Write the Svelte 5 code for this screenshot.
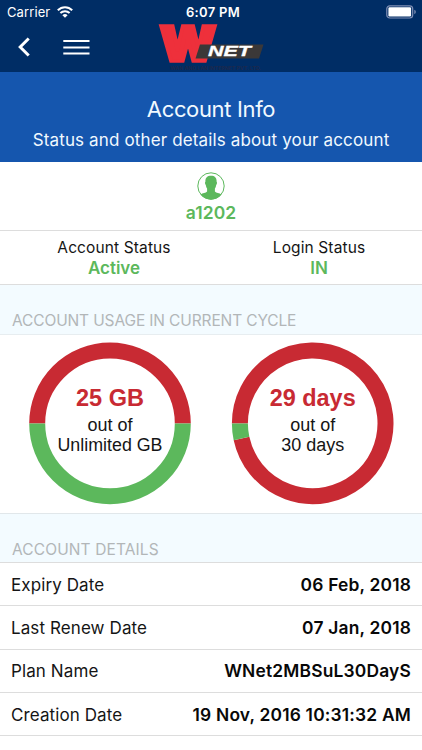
<script>
  const details = [
    { label: 'Expiry Date', value: '06 Feb, 2018' },
    { label: 'Last Renew Date', value: '07 Jan, 2018' },
    { label: 'Plan Name', value: 'WNet2MBSuL30DayS' },
    { label: 'Creation Date', value: '19 Nov, 2016 10:31:32 AM' }
  ];
</script>

<main>
  <header>
    <div class="status">
      <div class="network">
        <span class="carrier">Carrier</span>
        <svg class="wifi" width="16" height="12" viewBox="0 0 16 12">
          <g fill="none" stroke="#fff" stroke-width="2">
            <path d="M.8 4.3C4.9.2 11.1.2 15.2 4.3" />
            <path d="M3.4 7C6 4.5 10 4.5 12.6 7" />
          </g>
          <path d="M8 11.8 5.4 9.2Q8 6.8 10.6 9.2Z" fill="#fff" />
        </svg>
      </div>
      <span class="time">6:07 PM</span>
      <svg class="battery" width="31" height="14" viewBox="0 0 31 14">
        <rect x=".8" y=".8" width="25.9" height="12.2" rx="3" fill="none" stroke="#8090b5" stroke-width="1.2" />
        <rect x="2.4" y="2.3" width="22.7" height="9.2" rx="1.2" fill="#fff" />
        <path d="M28.3 4.8q1.5.6 1.5 2.2t-1.5 2.2z" fill="#8090b5" />
      </svg>
    </div>
    <nav>
      <svg class="back" width="14" height="20" viewBox="0 0 14 20"><path d="M11.7 1.5 3.2 10l8.5 8.5" fill="none" stroke="#fff" stroke-width="3" /></svg>
      <svg class="menu" width="27" height="17" viewBox="0 0 27 17"><path d="M.3 2h26.2M.3 8.4h26.2M.3 14.6h26.2" stroke="#fff" stroke-width="2" /></svg>
      <svg class="logo" width="112" height="50" viewBox="155 22 112 50">
        <text class="w" x="0" y="0" transform="translate(160 61) scale(1 1.2)" textLength="56" lengthAdjust="spacingAndGlyphs">W</text>
        <path d="M200 44.500h63.500l-4.500 14h-63.500z" fill="#3b3838" />
        <text class="net" x="208" y="56" textLength="43" lengthAdjust="spacingAndGlyphs">NET</text>
        <text class="tag" x="170" y="69.500" textLength="91" lengthAdjust="spacingAndGlyphs">WAN AND LAN INTERNET PVT. LTD.</text>
      </svg>
    </nav>
  </header>

  <section class="title">
    <h1>Account Info</h1>
    <p>Status and other details about your account</p>
  </section>

  <section class="user">
    <svg width="28" height="28" viewBox="0 0 28 28">
      <circle cx="14" cy="14" r="13.2" fill="#fff" stroke="#5cb85c" stroke-width="1" />
      <path d="M14 3.8c4 0 5.800 2.200 5.600 5.900.7.3.4 2.700-.4 3.200-.3 1.800-.8 2.800-1.300 3.500v3c1.200 1.500 4.500 1.400 6.600 3.100A13.200 13.200 0 0 1 3.500 22.500c2.100-1.700 5.400-1.600 6.600-3.100v-3c-.5-.7-1-1.700-1.300-3.500-.8-.5-1.100-2.900-.4-3.200-.2-3.700 1.600-5.900 5.600-5.900z" fill="#5cb85c" />
    </svg>
    <b>a1202</b>
  </section>

  <section class="states">
    <div class="account"><span>Account Status</span><b>Active</b></div>
    <div class="login"><span>Login Status</span><b>IN</b></div>
  </section>

  <h2 class="usage-title">ACCOUNT USAGE IN CURRENT CYCLE</h2>
  <section class="charts">
    <svg width="162" height="163" viewBox="-81 -81.400 162 163">
      <path d="M-72.800 0A72.800 72.800 0 0 1 72.800 0" fill="none" stroke="#c82a33" stroke-width="16" />
      <path d="M72.800 0A72.800 72.800 0 0 1-72.800 0" fill="none" stroke="#5cb85c" stroke-width="16" />
      <text class="amount" y="-17" textLength="68" lengthAdjust="spacingAndGlyphs">25 GB</text>
      <text y="8" textLength="45" lengthAdjust="spacingAndGlyphs">out of</text>
      <text y="27.500" textLength="105" lengthAdjust="spacingAndGlyphs">Unlimited GB</text>
    </svg>
    <svg width="162" height="163" viewBox="-80.700 -81.400 162 163">
      <path d="M-72.800 0A72.800 72.800 0 1 1-71.200 15.100" fill="none" stroke="#c82a33" stroke-width="16" />
      <path d="M-71.200 15.100A72.800 72.800 0 0 1-72.800 0" fill="none" stroke="#5cb85c" stroke-width="16" />
      <text class="amount" y="-17" textLength="86" lengthAdjust="spacingAndGlyphs">29 days</text>
      <text y="8" textLength="45" lengthAdjust="spacingAndGlyphs">out of</text>
      <text y="27.500" textLength="63" lengthAdjust="spacingAndGlyphs">30 days</text>
    </svg>
  </section>

  <h2 class="details-title">ACCOUNT DETAILS</h2>
  <dl>
    {#each details as d}
      <div class="row">
        <dt>{d.label}</dt>
        <dd>{d.value}</dd>
      </div>
    {/each}
  </dl>
</main>

<style>
  :global(body) { margin: 0; background: #fff; }
  main { width: 422px; height: 750px; overflow: hidden; background: #fff; color: #151515; font-family: Inter, "Liberation Sans", sans-serif; }
  header { height: 72px; background: #002d65; color: #fff; }
  .status { display: grid; grid-template-columns: 1fr auto 1fr; align-items: center; height: 24px; padding: 0 3px 0 7px; box-sizing: border-box; line-height: 24px; }
  .network { display: flex; align-items: center; gap: 7px; }
  .carrier { font-size: 13px; letter-spacing: .1px; }
  .time { font-size: 13px; font-weight: 600; letter-spacing: .3px; }
  .battery { justify-self: end; margin-right: 2px; }
  nav { display: flex; height: 48px; }
  .back { margin: 13px 0 0 17px; }
  .menu { margin: 15px 0 0 32px; }
  .logo { margin-left: 65px; margin-top: -2px; overflow: visible; }
  .w { font: 900 40px Inter, sans-serif; fill: #ee303b; stroke: #ee303b; stroke-width: 3; }
  .net { font: italic 800 15px "Liberation Sans", Arial, sans-serif; fill: #fff; stroke: #fff; stroke-width: .3; }
  .tag { font: 700 5px Inter, sans-serif; fill: #1c294d; }
  .title { height: 90px; background: #1556ae; color: #f1f9ff; text-align: center; box-sizing: border-box; padding-top: 22px; }
  h1 { margin: 0; font-size: 22px; font-weight: 400; line-height: 31px; letter-spacing: -.35px; }
  p { margin: 0; font-size: 17px; line-height: 31px; letter-spacing: .14px; }
  .user { height: 69px; border-bottom: 1px solid #ddd; box-sizing: border-box; display: flex; flex-direction: column; align-items: center; padding-top: 10px; color: #5cb85c; }
  .user b { font-size: 17.500px; line-height: 26px; font-weight: 600; letter-spacing: .1px; }
  .states { height: 54px; border-bottom: 1px solid #ddd; box-sizing: border-box; display: flex; text-align: center; }
  .states div { display: flex; flex-direction: column; padding-top: 6px; }
  .account { width: 228px; }
  .login { width: 182px; }
  .states span { font-size: 15.500px; line-height: 21px; letter-spacing: .12px; }
  .states b { font-size: 17px; font-weight: 600; line-height: 20px; color: #5cb85c; }
  h2 { margin: 0; box-sizing: border-box; background: #f3fbff; color: #b2b6b8; font-size: 15.500px; font-weight: 400; line-height: 20px; padding-left: 12px; border-bottom: 1px solid #e7edf0; }
  .usage-title { height: 50px; padding-top: 26px; letter-spacing: -.13px; }
  .charts { height: 178px; display: flex; padding: 7px 0 0 28px; gap: 41px; box-sizing: border-box; align-items: flex-start; }
  .charts svg { margin-left: .5px; overflow: visible; }
  .charts text { font: 18px "Liberation Sans", Arial, sans-serif; text-anchor: middle; fill: #151515; }
  .charts .amount { font-size: 23px; font-weight: 700; fill: #c82a33; }
  .details-title { height: 50px; border-top: 1px solid #e1e7ea; border-bottom-color: #ddd; padding-top: 26px; letter-spacing: .12px; }
  dl { margin: 0; }
  .row { height: 43.300px; border-bottom: 1px solid #ddd; box-sizing: border-box; display: flex; justify-content: space-between; align-items: center; padding: 0 11px; }
  dt { font-size: 17px; letter-spacing: .1px; padding-top: 1px; }
  dd { margin: 0; font-size: 17.400px; font-weight: 600; letter-spacing: .19px; color: #080808; }
</style>
